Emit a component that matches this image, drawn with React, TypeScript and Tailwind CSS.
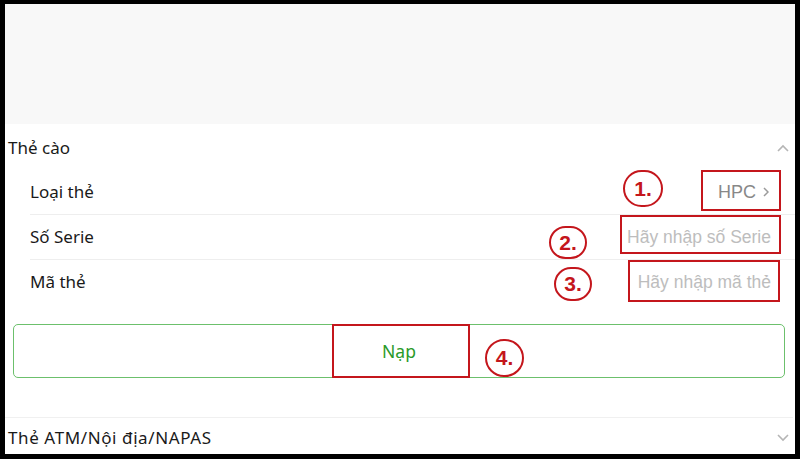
import React from "react";

const font = { fontFamily: '"Noto Sans", "Open Sans", sans-serif' };
const arial = { fontFamily: '"Liberation Sans", Arial, sans-serif' };

function ChevronUp() {
  return (
    <svg width="12" height="8" viewBox="0 0 12 8" fill="none">
      <path d="M1 7L6 2L11 7" stroke="#b5b5b5" strokeWidth="1.6" />
    </svg>
  );
}
function ChevronDown() {
  return (
    <svg width="12" height="8" viewBox="0 0 12 8" fill="none">
      <path d="M1 1L6 6L11 1" stroke="#b5b5b5" strokeWidth="1.6" />
    </svg>
  );
}

function Circle({ n, cls }: { n: string; cls: string }) {
  return (
    <div
      className={`absolute flex items-center justify-center rounded-full border-2 border-[#c4161c] text-[#c4161c] font-bold text-[21px] leading-none ${cls}`}
      style={arial}
    >
      <span className="pb-[1px]">{n}</span>
    </div>
  );
}

export default function App() {
  return (
    <div className="w-[800px] h-[459px] bg-black pt-[4px] pl-[5px] pr-[5px] pb-[5px] overflow-hidden">
      <div className="relative w-full h-full bg-white flex flex-col text-[#1a1a1a]" style={font}>
        <div className="h-[120px] bg-[#f8f8f8] shrink-0" />
        <div className="h-[46px] shrink-0 flex items-center justify-between pl-[3px] pr-[6px] pt-[2px] text-[17px]">
          <span>Thẻ cào</span>
          <ChevronUp />
        </div>
        <div className="pl-[25px] text-[17px]">
          <div className="h-[45px] flex items-center justify-between border-b border-[#eeeeee] pr-[26px]">
            <span>Loại thẻ</span>
            <span className="text-[#888888] text-[18px] flex items-center gap-[7px]" style={arial}>
              HPC
              <svg width="6" height="10" viewBox="0 0 6 10" fill="none">
                <path d="M1 1L5 5L1 9" stroke="#9a9a9a" strokeWidth="1.5" />
              </svg>
            </span>
          </div>
          <div className="h-[45px] flex items-center justify-between border-b border-[#eeeeee] pr-[24px]">
            <span>Số Serie</span>
            <span className="text-[#bdbdbd] text-[17.5px]" style={arial}>Hãy nhập số Serie</span>
          </div>
          <div className="h-[44px] flex items-center justify-between pr-[24px]">
            <span>Mã thẻ</span>
            <span className="text-[#bdbdbd] text-[17.5px]" style={arial}>Hãy nhập mã thẻ</span>
          </div>
        </div>
        <div className="pl-[8px] pr-[10px] pt-[20px]">
          <div className="h-[54px] border border-[#6cc06c] rounded-[5px] flex items-center justify-center text-[#2a9a2a] text-[17.5px]">
            Nạp
          </div>
        </div>
        <div className="mt-[39px] border-t border-[#f0f0f0] mr-[2px] h-[43px] flex items-center justify-between pl-[3px] pr-[4px] pt-[3px] text-[17px] tracking-[0.6px]">
          <span>Thẻ ATM/Nội địa/NAPAS</span>
          <ChevronDown />
        </div>

        {/* annotations */}
        <div className="absolute left-[696px] top-[166px] w-[80px] h-[41px] border-2 border-[#c4161c]" />
        <div className="absolute left-[615px] top-[211px] w-[161px] h-[39px] border-2 border-[#c4161c]" />
        <div className="absolute left-[623px] top-[256px] w-[152px] h-[42px] border-2 border-[#c4161c]" />
        <div className="absolute left-[327px] top-[320px] w-[138px] h-[54px] border-2 border-[#c4161c]" />
        <Circle n="1." cls="left-[618px] top-[166px] w-[40px] h-[37px]" />
        <Circle n="2." cls="left-[544px] top-[222px] w-[38px] h-[33px]" />
        <Circle n="3." cls="left-[549px] top-[263px] w-[38px] h-[34px]" />
        <Circle n="4." cls="left-[480px] top-[335px] w-[39px] h-[38px]" />
      </div>
    </div>
  );
}
